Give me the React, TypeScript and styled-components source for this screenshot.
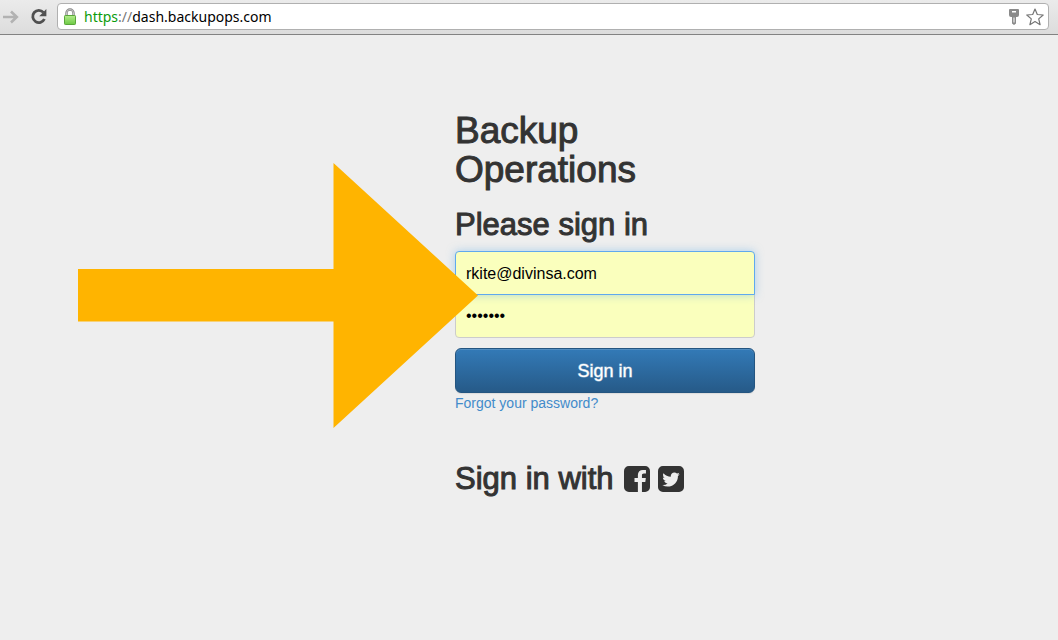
import React from 'react';
import styled, { createGlobalStyle, css } from 'styled-components';

const GlobalStyle = createGlobalStyle`
  *, *::before, *::after { box-sizing: border-box; }
  body {
    margin: 0;
    background: #eeeeee;
    color: #333333;
    font-family: "Liberation Sans", Arial, sans-serif;
    font-size: 14px;
    line-height: 20px;
  }
`;

const Toolbar = styled.header`
  display: flex;
  align-items: center;
  gap: 10px;
  height: 35px;
  padding: 0 9px 1px 3px;
  background: linear-gradient(#ebebeb, #dcdcdc);
  border-bottom: 1px solid #828282;
`;

const ToolButton = styled.button`
  display: flex;
  padding: 0;
  border: 0;
  background: none;
`;

const AddressBar = styled.div`
  display: flex;
  flex: 1;
  align-items: center;
  height: 27px;
  padding: 0 3px 0 5px;
  gap: 5px;
  background: #ffffff;
  border: 1px solid #b0b0b0;
  border-radius: 4px;
`;

const Address = styled.div`
  flex: 1;
  padding-left: 2px;
  color: #000000;
  font-family: "Noto Sans", "Open Sans", sans-serif;
  font-size: 14px;
  white-space: nowrap;
`;

const Scheme = styled.span`
  color: #0b9b0b;
`;

const Slashes = styled.span`
  color: #777777;
`;

const Page = styled.main`
  display: flex;
  justify-content: center;
  padding: 76px 0 40px 152px;
`;

const SignIn = styled.form`
  position: relative;
  width: 300px;
`;

const heading = css`
  margin: 0;
  font-weight: 400;
  -webkit-text-stroke: 1px #333333;
`;

const Brand = styled.h1`
  ${heading}
  font-size: 37px;
  line-height: 39px;
`;

const Title = styled.h2`
  ${heading}
  display: flex;
  align-items: center;
  gap: 8px;
  font-size: 31px;
  line-height: 32px;
`;

const Prompt = styled(Title)`
  margin: 20px 0 10px;
`;

const Social = styled(Title)`
  margin-top: 50px;
`;

const SocialLabel = styled.span`
  padding-right: 2px;
`;

const SocialLink = styled.a`
  display: flex;
  color: #333333;
`;

const Field = styled.input<{ $place: 'top' | 'bottom'; $active?: boolean }>`
  position: relative;
  z-index: ${(p) => (p.$active ? 1 : 0)};
  display: block;
  width: 100%;
  height: 44px;
  margin: 0;
  padding: ${(p) => (p.$place === 'top' ? '11px 10px 9px' : '10px')};
  color: #000000;
  background: #faffbd;
  border: 1px solid ${(p) => (p.$active ? '#5fa9ee' : '#cccccc')};
  border-radius: ${(p) => (p.$place === 'top' ? '4px 4px 0 0' : '0 0 4px 4px')};
  box-shadow: ${(p) => (p.$active ? '0 0 8px rgba(102, 175, 233, 0.5)' : 'none')};
  font-family: inherit;
  font-size: 16px;
  outline: none;

  & + & {
    margin-top: -1px;
  }
`;

const Submit = styled.button`
  display: block;
  width: 100%;
  height: 45px;
  margin: 10px 0 0;
  padding: 2px 0 0;
  color: #ffffff;
  background: linear-gradient(#337ab7, #265a88);
  border: 1px solid #245580;
  border-radius: 6px;
  box-shadow: inset 0 1px 0 rgba(255, 255, 255, 0.15), 0 1px 1px rgba(0, 0, 0, 0.08);
  font-family: inherit;
  font-size: 18px;
  -webkit-text-stroke: 1px rgba(255, 255, 255, 0.5);
`;

const ForgotLink = styled.a`
  display: block;
  color: #428bca;
  text-decoration: none;
`;

const Pointer = styled.svg`
  position: absolute;
  top: 52px;
  left: -377px;
  z-index: 2;
  pointer-events: none;
`;

const ForwardIcon = () => (
  <svg width="17" height="16" viewBox="0 0 17 16" fill="none" aria-hidden="true">
    <path d="M0 8h13M8 2.500L13.800 8 8 13.500" stroke="#b2b2b2" strokeWidth="2.600" />
  </svg>
);

const ReloadIcon = () => (
  <svg width="17" height="17" viewBox="0 0 17 17" fill="none" aria-hidden="true">
    <path d="M13.4 4.4A6.1 6.1 0 1 0 14.4 11" stroke="#505050" strokeWidth="2.8" />
    <path d="M16.4 1v7.2H9.2z" fill="#505050" />
  </svg>
);

const LockIcon = () => (
  <svg width="14" height="18" viewBox="0 0 14 18" fill="none" aria-hidden="true">
    <defs>
      <linearGradient id="lockBody" x1="0" y1="0" x2="0" y2="1">
        <stop offset="0" stopColor="#b4ec8c" />
        <stop offset="1" stopColor="#6cc944" />
      </linearGradient>
    </defs>
    <path d="M3.5 8.5V5a3.5 3.5 0 0 1 7 0v3.500" stroke="#858585" strokeWidth="2.4" />
    <path d="M3.500 8.500V5a3.500 3.500 0 0 1 7 0v3.500" stroke="#d6d6d6" strokeWidth="0.8" />
    <rect x="1.500" y="7.500" width="11" height="9" rx="0.8" fill="url(#lockBody)" stroke="#59a63a" />
  </svg>
);

const KeyIcon = () => (
  <svg width="12" height="18" viewBox="0 0 12 18" aria-hidden="true">
    <path
      d="M2 1h8q1 0 1 1v5q0 2-2 2H8v6.500L6 17l-2-1.500V9H3Q1 9 1 7V2q0-1 1-1zM4 3v1.500h4V3zM5.500 9.500v5h1v-5z"
      fill="#8a8a8a"
      fillRule="evenodd"
    />
  </svg>
);

const StarIcon = () => (
  <svg width="20" height="18" viewBox="0 0 20 18" aria-hidden="true">
    <path
      d="M10 1l2.300 5.500 5.900.5-4.500 3.900 1.400 5.800L10 13.600l-5.100 3.100 1.400-5.800L1.800 7l5.900-.5z"
      fill="#ffffff"
      stroke="#757575"
      strokeWidth="1.200"
      strokeLinejoin="round"
    />
  </svg>
);

const FacebookIcon = () => (
  <svg width="26" height="26" viewBox="128 128 1536 1536" fill="currentColor" aria-hidden="true">
    <path d="M1376 128q119 0 203.500 84.500t84.500 203.500v960q0 119-84.500 203.500t-203.500 84.500h-188v-595h199l30-232h-229v-148q0-56 23.500-84t91.500-28l122-1v-207q-63-9-178-9-136 0-217.500 80t-81.500 226v171h-200v232h200v595h-532q-119 0-203.500-84.500t-84.500-203.500v-960q0-119 84.500-203.500t203.500-84.500h960z" />
  </svg>
);

const TwitterIcon = () => (
  <svg width="26" height="26" viewBox="128 128 1536 1536" fill="currentColor" aria-hidden="true">
    <path d="M1408 610q-56 25-121 34 68-40 93-117-65 38-134 51-61-66-153-66-87 0-148.500 61.500t-61.500 148.500q0 29 5 48-129-7-242-65t-192-155q-29 50-29 106 0 114 91 175-47-1-100-26v2q0 75 50 133.500t123 72.500q-29 8-51 8-13 0-39-4 21 63 74.500 104t121.500 42q-116 90-261 90-26 0-50-3 148 94 322 94 112 0 210-35.500t168-95 120.500-137 75-162 24.500-168.500q0-18-1-27 63-45 105-109zm256-194v960q0 119-84.500 203.500t-203.500 84.500h-960q-119 0-203.500-84.500t-84.500-203.500v-960q0-119 84.500-203.500t203.500-84.500h960q119 0 203.500 84.500t84.500 203.500z" />
  </svg>
);

export default function App() {
  return (
    <>
      <GlobalStyle />
      <Toolbar>
        <ToolButton type="button" aria-label="Forward">
          <ForwardIcon />
        </ToolButton>
        <ToolButton type="button" aria-label="Reload">
          <ReloadIcon />
        </ToolButton>
        <AddressBar>
          <LockIcon />
          <Address>
            <Scheme>https</Scheme>
            <Slashes>://</Slashes>dash.backupops.com
          </Address>
          <ToolButton type="button" aria-label="Saved passwords">
            <KeyIcon />
          </ToolButton>
          <ToolButton type="button" aria-label="Bookmark this page">
            <StarIcon />
          </ToolButton>
        </AddressBar>
      </Toolbar>
      <Page>
        <SignIn onSubmit={(e) => e.preventDefault()}>
          <Brand>
            Backup
            <br />
            Operations
          </Brand>
          <Prompt>Please sign in</Prompt>
          <Field $place="top" $active type="email" aria-label="Email address" defaultValue="rkite@divinsa.com" />
          <Field $place="bottom" type="password" aria-label="Password" defaultValue="example" />
          <Submit type="submit">Sign in</Submit>
          <ForgotLink href="#forgot">Forgot your password?</ForgotLink>
          <Social>
            <SocialLabel>Sign in with</SocialLabel>
            <SocialLink href="#facebook" aria-label="Facebook">
              <FacebookIcon />
            </SocialLink>
            <SocialLink href="#twitter" aria-label="Twitter">
              <TwitterIcon />
            </SocialLink>
          </Social>
          <Pointer width="400" height="265" viewBox="0 0 400 265" aria-hidden="true">
            <path d="M0 106h255.500V0L400 132.500 255.500 265V158.500H0z" fill="#ffb400" />
          </Pointer>
        </SignIn>
      </Page>
    </>
  );
}
